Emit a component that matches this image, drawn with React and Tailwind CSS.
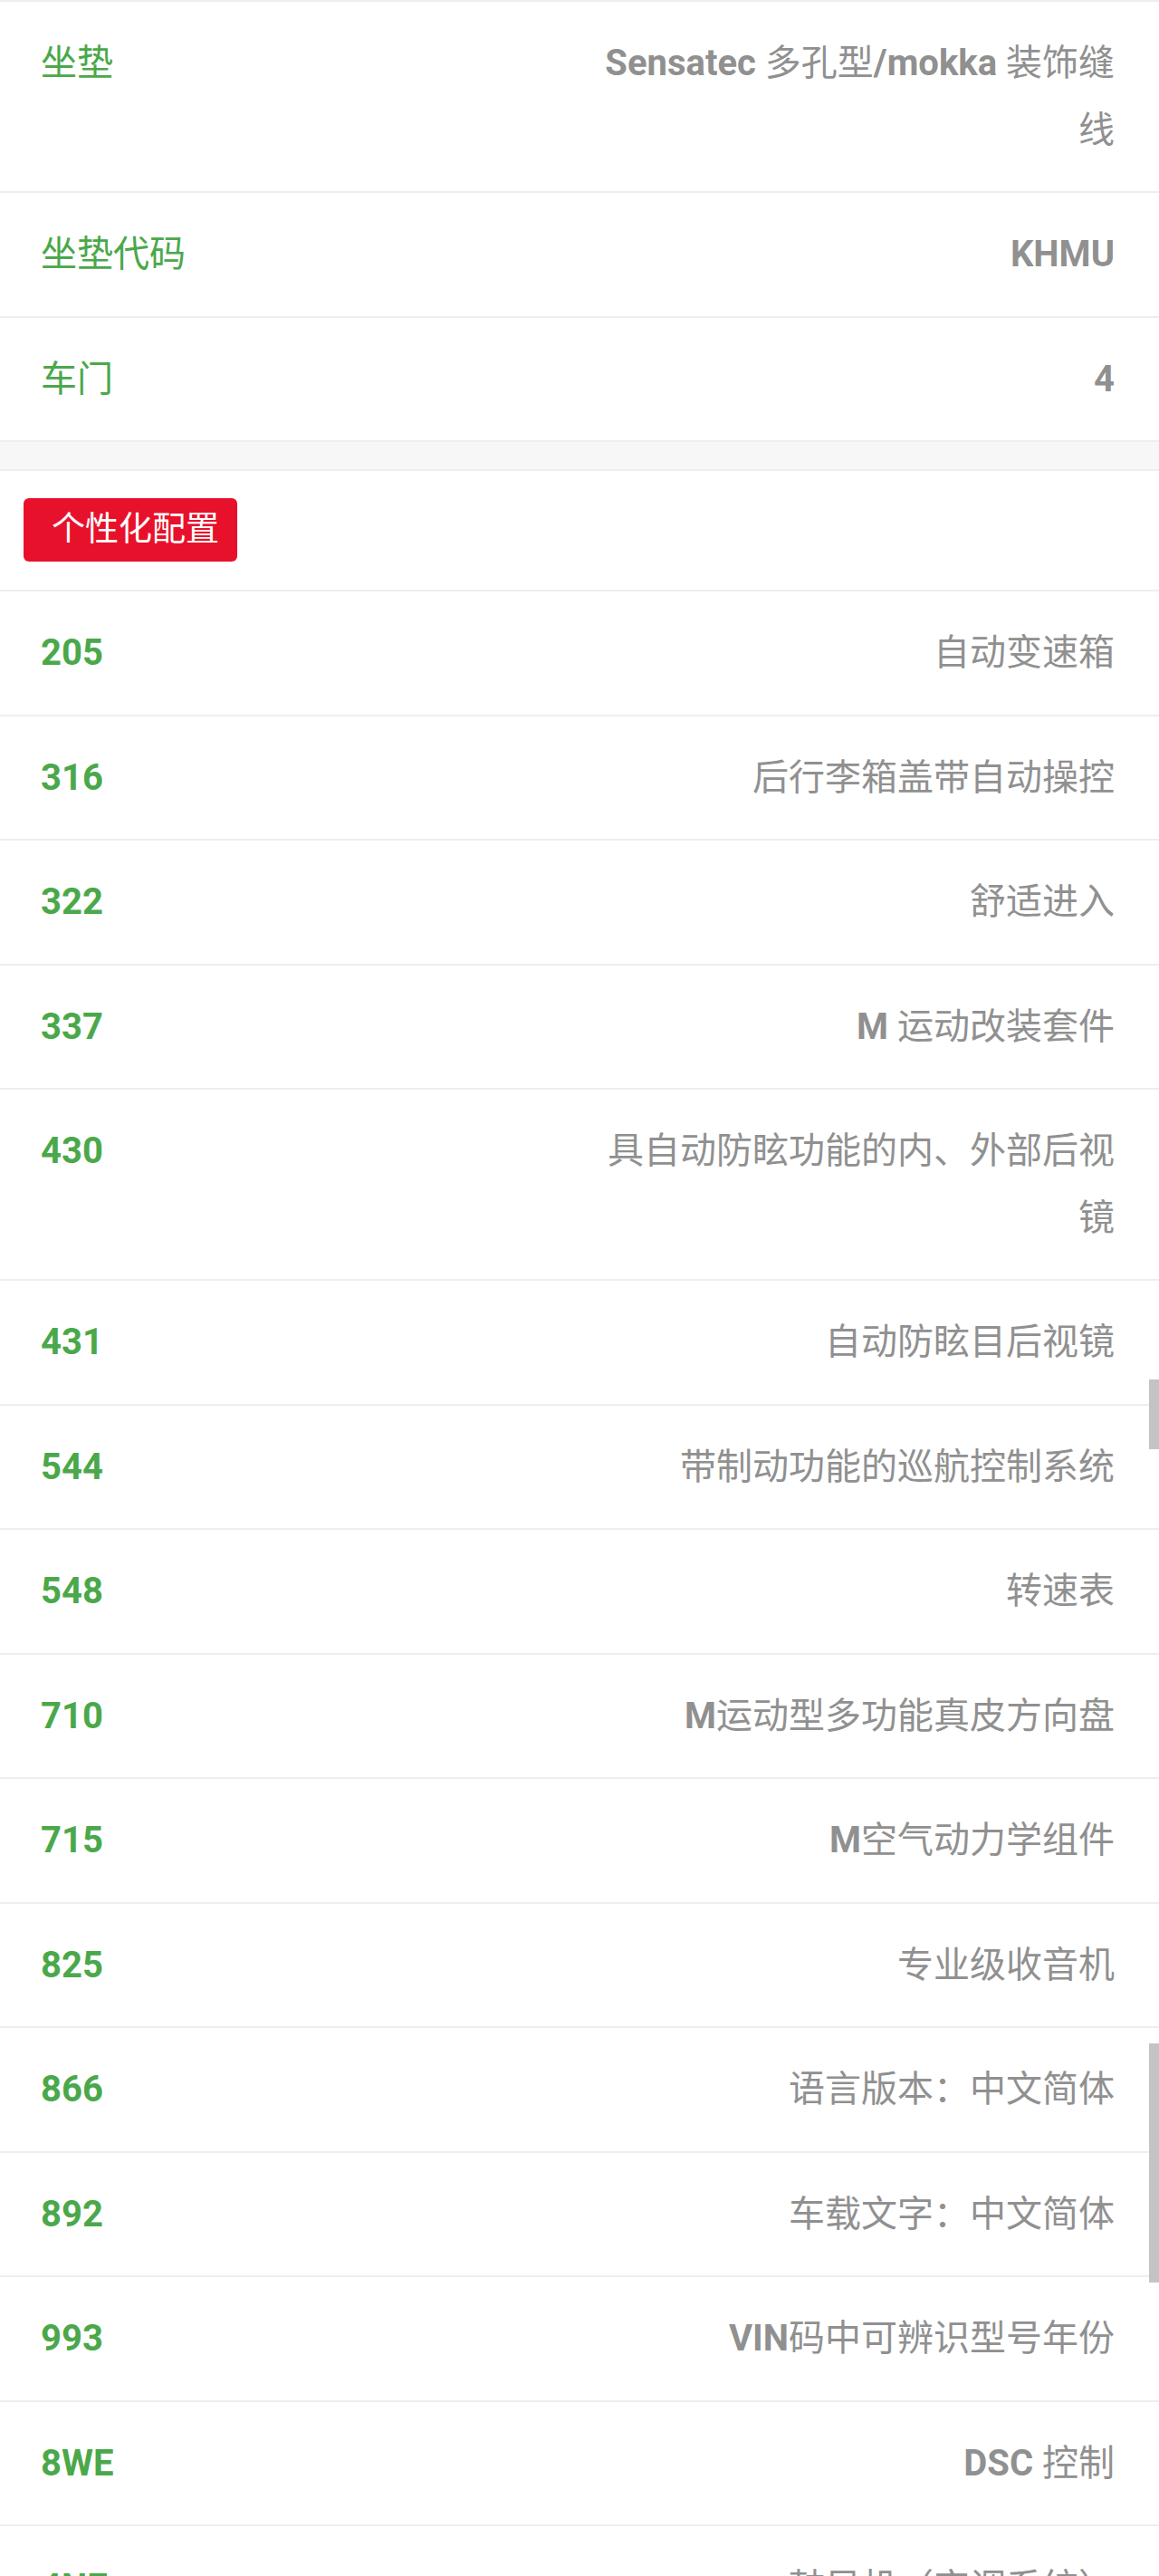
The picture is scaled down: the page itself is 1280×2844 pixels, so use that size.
import React from 'react';

const basicRows = [
  { label: '坐垫', value: 'Sensatec 多孔型/mokka 装饰缝线' },
  { label: '坐垫代码', value: 'KHMU' },
  { label: '车门', value: '4' },
];

const optionRows = [
  { code: '205', value: '自动变速箱' },
  { code: '316', value: '后行李箱盖带自动操控' },
  { code: '322', value: '舒适进入' },
  { code: '337', value: 'M 运动改装套件' },
  { code: '430', value: '具自动防眩功能的内、外部后视镜' },
  { code: '431', value: '自动防眩目后视镜' },
  { code: '544', value: '带制动功能的巡航控制系统' },
  { code: '548', value: '转速表' },
  { code: '710', value: 'M运动型多功能真皮方向盘' },
  { code: '715', value: 'M空气动力学组件' },
  { code: '825', value: '专业级收音机' },
  { code: '866', value: '语言版本：中文简体' },
  { code: '892', value: '车载文字：中文简体' },
  { code: '993', value: 'VIN码中可辨识型号年份' },
  { code: '8WE', value: 'DSC 控制' },
  { code: '4NE', value: '鼓风机（空调系统）' },
  { code: '4UR', value: '车内照明' },
];

// latin parts render bold, the CJK font stays regular
const Mixed = ({ text }) =>
  text.split(/([\x21-\x7E]+)/).map((part, i) =>
    /^[\x21-\x7E]+$/.test(part) ? (
      <span key={i} className="font-bold">{part}</span>
    ) : (
      <span key={i} className="font-normal">{part}</span>
    )
  );

const Row = ({ label, value }) => (
  <div className="grid grid-cols-2 pl-[45px] pr-[49px] py-[31px] border-b-2 border-[#eeeeee] leading-[73.5px]">
    <div className="text-[#4aa84a]">
      <Mixed text={label} />
    </div>
    <div className="text-right text-[#909090]">
      <Mixed text={value} />
    </div>
  </div>
);

const App = () => {
  return (
    <div
      className="relative h-[2844px] overflow-hidden bg-white text-[40px]"
      style={{ fontFamily: 'Roboto, "Noto Sans CJK SC", sans-serif' }}
    >
      {/* 基本信息 */}
      <div className="border-t-2 border-[#eeeeee]">
        {basicRows.map((r) => (
          <Row key={r.label} label={r.label} value={r.value} />
        ))}
      </div>

      <div className="h-[30px] bg-[#f7f7f7]" />

      {/* 个性化配置 */}
      <div className="border-t-2 border-[#eeeeee]">
        <div className="pl-[26px] pt-[30px] pb-[31px] border-b-2 border-[#eeeeee]">
          <span className="inline-block h-[70px] leading-[70px] pl-[31px] pr-[20px] rounded-md bg-[#e8112b] text-white text-[37px]">
            个性化配置
          </span>
        </div>
        {optionRows.map((r) => (
          <Row key={r.code} label={r.code} value={r.value} />
        ))}
      </div>

      {/* scroll indicators */}
      <div className="absolute right-0 top-[1523px] w-[11px] h-[77px] bg-[#c4c4c4]" />
      <div className="absolute right-0 top-[2256px] w-[11px] h-[264px] bg-[#c4c4c4]" />
    </div>
  );
};

export default App;
